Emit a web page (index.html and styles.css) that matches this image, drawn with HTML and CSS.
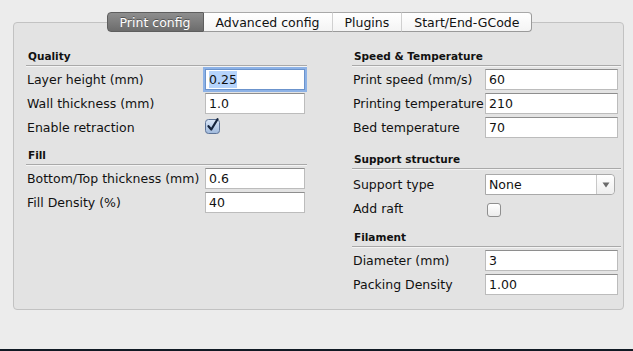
FILE: index.html
```html
<!DOCTYPE html>
<html>
<head>
<meta charset="utf-8">
<link rel="stylesheet" href="styles.css">
</head>
<body>
<div class="window">
  <div class="tabs">
    <div class="tab tab-active">Print config</div>
    <div class="tab">Advanced config</div>
    <div class="tab">Plugins</div>
    <div class="tab tab-last">Start/End-GCode</div>
  </div>
  <div class="panel">
    <div class="col col-left">
      <div class="section-title">Quality</div>
      <div class="row"><span class="label">Layer height (mm)</span><div class="input input-focus"><span class="sel">0.25</span></div></div>
      <div class="row"><span class="label">Wall thickness (mm)</span><div class="input">1.0</div></div>
      <div class="row"><span class="label">Enable retraction</span>
        <svg class="check" width="16" height="16" viewBox="0 0 16 16">
          <defs><linearGradient id="cb" x1="0" y1="0" x2="0" y2="1"><stop offset="0" stop-color="#dbe7f7"/><stop offset="1" stop-color="#9fb9dc"/></linearGradient></defs>
          <rect x="0.5" y="1.5" width="14" height="14" rx="3" fill="url(#cb)" stroke="#5d7397"/>
          <path d="M3.5 8.2 L6.3 11.5 L12.5 1.2" fill="none" stroke="#15243d" stroke-width="2.2" stroke-linecap="round" stroke-linejoin="round"/>
        </svg>
      </div>
      <div class="section-title sec-gap">Fill</div>
      <div class="row"><span class="label">Bottom/Top thickness (mm)</span><div class="input">0.6</div></div>
      <div class="row"><span class="label">Fill Density (%)</span><div class="input">40</div></div>
    </div>
    <div class="col col-right">
      <div class="section-title">Speed &amp; Temperature</div>
      <div class="row"><span class="label">Print speed (mm/s)</span><div class="input">60</div></div>
      <div class="row"><span class="label">Printing temperature</span><div class="input">210</div></div>
      <div class="row"><span class="label">Bed temperature</span><div class="input">70</div></div>
      <div class="section-title sec-gap2">Support structure</div>
      <div class="row row-select"><span class="label">Support type</span>
        <div class="select"><span class="select-val">None</span><span class="select-btn"><svg width="8" height="6" viewBox="0 0 8 6"><path d="M0.5 0.5 L7.5 0.5 L4 5.5 Z" fill="#6a6a6a"/></svg></span></div>
      </div>
      <div class="row"><span class="label">Add raft</span><span class="box"></span></div>
      <div class="section-title sec-gap3">Filament</div>
      <div class="row"><span class="label">Diameter (mm)</span><div class="input">3</div></div>
      <div class="row"><span class="label">Packing Density</span><div class="input">1.00</div></div>
    </div>
  </div>
</div>
</body>
</html>
```

FILE: styles.css
```css
html, body {
  margin: 0;
  padding: 0;
}
body {
  width: 633px;
  height: 351px;
  box-sizing: border-box;
  background: #ececec;
  border-bottom: 2px solid #111a24;
  font-family: "DejaVu Sans", "Liberation Sans", sans-serif;
  color: #111;
  overflow: hidden;
}
.window {
  padding: 12px 10px 0 13px;
}
.tabs {
  display: flex;
  justify-content: center;
  height: 20px;
  margin-bottom: -10px;
  position: relative;
  z-index: 1;
  padding-left: 3px;
}
.tab {
  box-sizing: border-box;
  height: 20px;
  line-height: 19px;
  font-size: 12.5px;
  padding: 0 12px;
  background: linear-gradient(#ffffff, #f4f4f4);
  border-top: 1px solid #a8a8a8;
  border-bottom: 1px solid #9a9a9a;
  border-right: 1px solid #d0d0d0;
  color: #111;
  white-space: nowrap;
}
.tab-active {
  background: linear-gradient(#8e8e8e, #6c6c6c);
  color: #fff;
  border: 1px solid #5e5e5e;
  border-radius: 4px 0 0 4px;
  text-shadow: 0 -1px 0 #555;
}
.tab-last {
  border-right: 1px solid #9a9a9a;
  border-radius: 0 4px 4px 0;
}
.panel {
  box-sizing: border-box;
  height: 288px;
  width: 611px;
  background: #e3e3e3;
  border: 1px solid #c2c2c2;
  border-radius: 4px;
  padding: 25px 0 0 12px;
  display: flex;
  gap: 45px;
}
.col-left {
  width: 281px;
}
.col-right {
  width: 269px;
}
.section-title {
  font-size: 10.5px;
  font-weight: bold;
  height: 17px;
  line-height: 16px;
  padding-left: 2px;
  border-bottom: 1px solid #a9a9a9;
  box-shadow: 0 1px 0 #f4f4f4;
  margin-bottom: 3px;
}
.sec-gap { margin-top: 9px; }
.sec-gap2 { margin-top: 13px; }
.sec-gap3 { margin-top: 10px; }
.row {
  display: flex;
  align-items: center;
  height: 21px;
  margin-bottom: 3px;
}
.row-select {
  margin-top: 5px;
}
.label {
  font-size: 12.5px;
  white-space: nowrap;
  flex: none;
  padding-left: 1px;
}
.col-left .label { width: 178px; }
.col-right .label { width: 132px; }
.input {
  box-sizing: border-box;
  height: 21px;
  background: #fff;
  border: 1px solid #bcbcbc;
  border-top-color: #8e8e8e;
  font-size: 12.5px;
  line-height: 19px;
  padding-left: 3px;
}
.col-left .input { width: 100px; }
.col-right .input { width: 133px; }
.input-focus {
  border-color: #6b93cc;
  box-shadow: 0 0 0 2px #8db2e6;
}
.sel {
  background: #b6d4fc;
  padding: 1px 0;
}
.check {
  margin-top: -3px;
}
.select {
  box-sizing: border-box;
  width: 130px;
  height: 21px;
  background: #fff;
  border: 1px solid #a9a9a9;
  border-radius: 0 4px 4px 0;
  display: flex;
  font-size: 12.5px;
  line-height: 19px;
}
.select-val {
  flex: 1;
  padding-left: 3px;
}
.select-btn {
  width: 17px;
  border-left: 1px solid #c8c8c8;
  display: flex;
  align-items: center;
  justify-content: center;
  background: linear-gradient(#ffffff, #eeeeee);
  border-radius: 0 4px 4px 0;
}
.box {
  box-sizing: border-box;
  width: 14px;
  height: 14px;
  margin-left: 2px;
  margin-top: 3px;
  border: 1px solid #8f8f8f;
  border-radius: 3px;
  background: linear-gradient(#ffffff, #ececec);
}
```
